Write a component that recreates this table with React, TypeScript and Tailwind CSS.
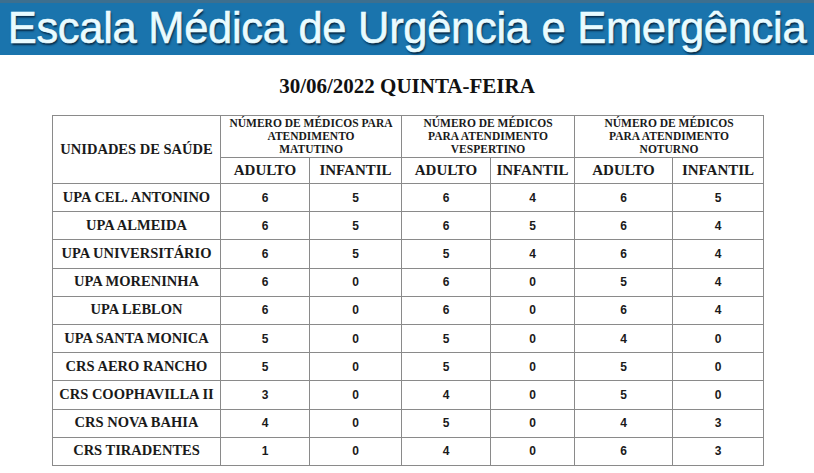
import React from 'react'

const rows: [string, number[]][] = [
  ['UPA CEL. ANTONINO', [6, 5, 6, 4, 6, 5]],
  ['UPA ALMEIDA', [6, 5, 6, 5, 6, 4]],
  ['UPA UNIVERSITÁRIO', [6, 5, 5, 4, 6, 4]],
  ['UPA MORENINHA', [6, 0, 6, 0, 5, 4]],
  ['UPA LEBLON', [6, 0, 6, 0, 6, 4]],
  ['UPA SANTA MONICA', [5, 0, 5, 0, 4, 0]],
  ['CRS AERO RANCHO', [5, 0, 5, 0, 5, 0]],
  ['CRS COOPHAVILLA II', [3, 0, 4, 0, 5, 0]],
  ['CRS NOVA BAHIA', [4, 0, 5, 0, 4, 3]],
  ['CRS TIRADENTES', [1, 0, 4, 0, 6, 3]],
]

const shifts = [
  ['NÚMERO DE MÉDICOS PARA', 'ATENDIMENTO', 'MATUTINO'],
  ['NÚMERO DE MÉDICOS', 'PARA ATENDIMENTO', 'VESPERTINO'],
  ['NÚMERO DE MÉDICOS', 'PARA ATENDIMENTO', 'NOTURNO'],
]

const cell = 'border border-[#8a8a8a] text-center align-middle p-0'
const serif = "font-['Liberation_Serif','Times_New_Roman','DejaVu_Serif',serif]"
const sans = "font-['Liberation_Sans',Arial,sans-serif]"

export default function App() {
  return (
    <div className="w-[814px] h-[473px] bg-white overflow-hidden">
      <div className="h-[55px] bg-[#1a74ad] border-t-[3px] border-[#3d6f8f] flex items-center justify-center">
        <h1
          className={`${sans} text-[43.5px] leading-none text-[#e9fbff] tracking-[-0.3px] [-webkit-text-stroke:0.6px_#e9fbff] [text-shadow:1px_2px_2px_rgba(0,20,40,0.8)]`}
        >
          Escala Médica de Urgência e Emergência
        </h1>
      </div>

      <h2 className={`${serif} mt-[21px] text-center text-[21px] font-bold text-[#111] leading-none`}>
        30/06/2022 QUINTA-FEIRA
      </h2>

      <table className={`${serif} mt-[18px] ml-[52px] border-collapse border border-[#8a8a8a] text-[#1a1a1a]`}>
        <colgroup>
          <col className="w-[168px]" />
          <col className="w-[89px]" />
          <col className="w-[92px]" />
          <col className="w-[89px]" />
          <col className="w-[84px]" />
          <col className="w-[98px]" />
          <col className="w-[91px]" />
        </colgroup>
        <thead className="font-bold">
          <tr className="h-[42px]">
            <th rowSpan={2} className={`${cell} text-[14.5px]`}>
              UNIDADES DE SAÚDE
            </th>
            {shifts.map((s) => (
              <th key={s[2]} colSpan={2} className={`${cell} text-[11.5px] leading-[13px] pb-[1px]`}>
                {s.map((l) => (
                  <div key={l}>{l}</div>
                ))}
              </th>
            ))}
          </tr>
          <tr className="h-[26px]">
            {shifts.map((s) => (
              <React.Fragment key={s[2]}>
                <th className={`${cell} text-[15px]`}>ADULTO</th>
                <th className={`${cell} text-[15px]`}>INFANTIL</th>
              </React.Fragment>
            ))}
          </tr>
        </thead>
        <tbody>
          {rows.map(([name, vals]) => (
            <tr key={name} className="h-[28.2px]">
              <td className={`${cell} text-[14.5px] font-bold whitespace-nowrap`}>{name}</td>
              {vals.map((v, i) => (
                <td key={i} className={`${cell} ${sans} text-[12px] font-bold`}>
                  {v}
                </td>
              ))}
            </tr>
          ))}
        </tbody>
      </table>
    </div>
  )
}
